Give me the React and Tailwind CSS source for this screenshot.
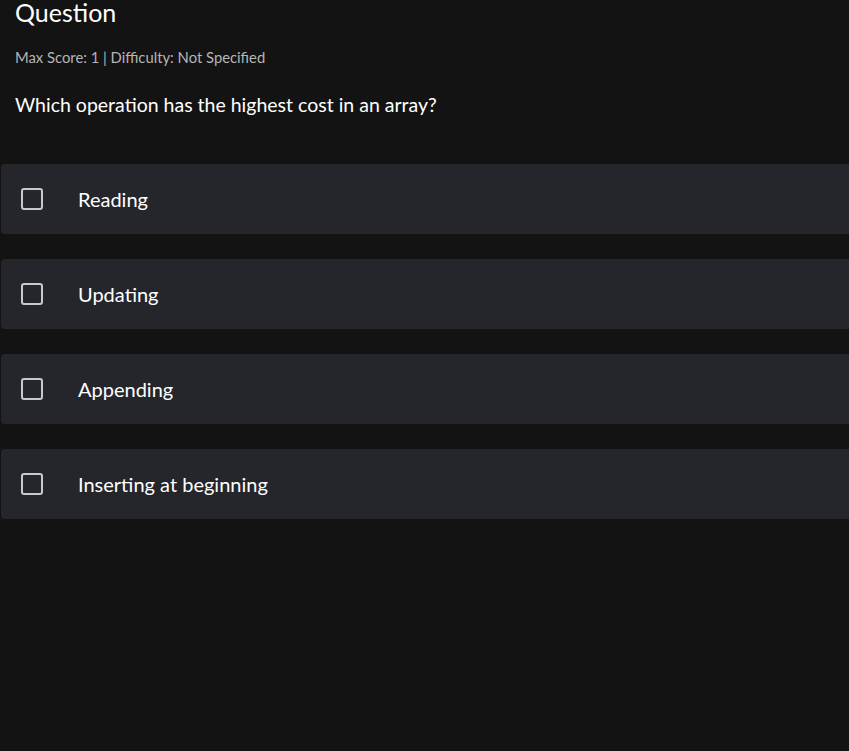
import { useState } from "react";

const options = ["Reading", "Updating", "Appending", "Inserting at beginning"];

export default function App() {
    const [checked, setChecked] = useState({});
    return (
        <div className="min-h-[751px] w-full overflow-hidden bg-[#131313] font-['Lato',sans-serif] text-white">
            <h2 className="pl-[15px] text-[25px] leading-[26px] -mt-[1px]">Question</h2>
            <p className="mt-[23px] pl-[15px] text-[14.8px] leading-[18px] text-[#b5b5b5]">
                Max Score: 1 | Difficulty: Not Specified
            </p>
            <p className="mt-[27px] pl-[15px] text-[19.5px] leading-[24px]">
                Which operation has the highest cost in an array?
            </p>

            <div className="mt-[47px] flex flex-col gap-[25px]">
                {options.map((opt) => (
                    <label
                        key={opt}
                        className="-mr-4 ml-[1px] flex h-[70px] cursor-pointer items-center rounded-[4px] bg-[#25262b] pl-[20px]"
                    >
                        <input
                            type="checkbox"
                            className="hidden"
                            checked={!!checked[opt]}
                            onChange={() => setChecked({ ...checked, [opt]: !checked[opt] })}
                        />
                        <span className="h-[22px] w-[22px] rounded-[3px] border-2 border-[#c9c9c9]" />
                        <span className="ml-[35px] text-[20px] text-white">{opt}</span>
                    </label>
                ))}
            </div>
        </div>
    );
}
